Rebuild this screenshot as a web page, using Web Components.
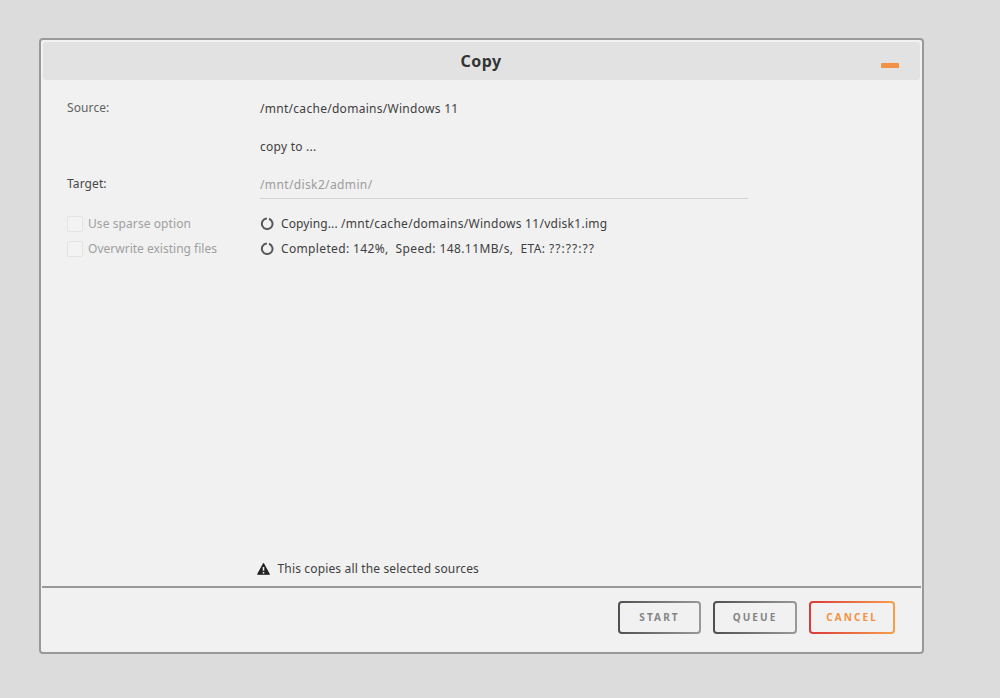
<!DOCTYPE html>
<html lang="en">
<head>
<meta charset="utf-8">
<title>Copy</title>
<style>
html, body { margin: 0; height: 100%; overflow: hidden; }
body { background: #dcdcdc; font-family: "Noto Sans", "Open Sans", sans-serif; font-size: 12px; color: #404040; }
file-dialog { margin: 38px 0 0 39px; }
</style>
</head>
<body>
<file-dialog heading="Copy">
  <field-row label="Source:" style="--h:37px;--c:#626262"><fit-text w="198.5">/mnt/cache/domains/Windows 11</fit-text></field-row>
  <field-row label="" style="--h:38px"><fit-text w="56.5">copy to ...</fit-text></field-row>
  <field-row label="Target:" style="--h:38px"><target-input><fit-text w="112.5">/mnt/disk2/admin/</fit-text></target-input></field-row>
  <option-row style="--h:25px"><fit-text slot="option" w="103">Use sparse option</fit-text><span><fit-text w="60">Copying... </fit-text><fit-text w="266.5">/mnt/cache/domains/Windows 11/vdisk1.img</fit-text></span></option-row>
  <option-row style="--h:25px"><fit-text slot="option" w="129">Overwrite existing files</fit-text><span><fit-text w="114.5">Completed: 142%,&nbsp;&nbsp;</fit-text><fit-text w="125">Speed: 148.11MB/s,&nbsp;&nbsp;</fit-text><fit-text w="28.5">ETA:&nbsp;</fit-text><fit-text w="46">??:??:??</fit-text></span></option-row>
  <warning-note slot="note"><fit-text w="201.5">This copies all the selected sources</fit-text></warning-note>
  <outline-button slot="actions" style="--w:83px">START</outline-button>
  <outline-button slot="actions" style="--w:84px">QUEUE</outline-button>
  <outline-button slot="actions" style="--w:86px;--from:#dd3838;--to:#f5a04e;--ink:#f29246">CANCEL</outline-button>
</file-dialog>
<script>
const define = (name, html, ready) => customElements.define(name, class extends HTMLElement {
  connectedCallback() {
    if (this.shadowRoot) return;
    this.attachShadow({ mode: "open" }).innerHTML = html;
    if (ready) ready(this, this.shadowRoot);
  }
});

// One line of text whose tracking is adjusted to a given width.
define("fit-text", `<style>
:host { display: inline-block; white-space: pre; line-height: 16px; }
</style><span><slot></slot></span>`, (host, root) => {
  const span = root.querySelector("span");
  const width = span.getBoundingClientRect().width;
  span.style.letterSpacing = (Number(host.getAttribute("w")) - width) / host.textContent.length + "px";
});

define("file-dialog", `<style>
:host { display: flex; flex-direction: column; box-sizing: border-box; width: 885px; height: 616px;
  border: 2px solid #999; border-radius: 4px; background: #f1f1f1; padding: 2px 1px 0 1px; }
header { height: 38px; flex: none; display: grid; grid-template-columns: 1fr auto 1fr; align-items: center;
  background: #e2e2e2; border-radius: 3px; margin: 0 1px; }
h1 { grid-column: 2; margin: 0 0 0 -1px; font-size: 16px; line-height: 22px; font-weight: 700; letter-spacing: .45px; color: #333; }
i { justify-self: end; width: 18px; height: 5px; margin: 8px 21px 0 0; border-radius: 1px; background: #f29246; }
main { flex: 1; padding: 10px 24px 0 25px; }
.note { height: 25px; padding-left: 215px; }
footer { height: 66px; box-sizing: border-box; flex: none; border-top: 2px solid #999; display: flex; justify-content: flex-end; gap: 12px; padding: 13px 26px 0 0; }
</style>
<header><h1></h1><i></i></header><main><slot></slot></main><div class="note"><slot name="note"></slot></div><footer><slot name="actions"></slot></footer>`,
(host, root) => root.querySelector("h1").textContent = host.getAttribute("heading"));

define("field-row", `<style>
:host { display: grid; grid-template-columns: 193px 488px; height: var(--h); align-items: center; }
label { line-height: 16px; letter-spacing: .1px; color: var(--c, #484848); margin-top: -1px; }
</style><label></label><div><slot></slot></div>`, (host, root) => root.querySelector("label").textContent = host.getAttribute("label"));

define("target-input", `<style>
:host { display: block; box-sizing: border-box; height: 30px; padding-top: 7px; border-bottom: 1px solid #d2d2d2; color: #9c9c9c; }
</style><slot></slot>`);

define("option-row", `<style>
:host { display: grid; grid-template-columns: 193px 1fr; height: var(--h); padding-top: 8px; margin-bottom: -8px; align-items: center; }
label { display: flex; align-items: center; gap: 5px; color: #a0a0a0; }
b { width: 16px; height: 16px; box-sizing: border-box; border: 1px solid #e3e3e3; border-radius: 2px; background: #f3f3f3; margin-top: 1px; }
div { display: flex; align-items: center; gap: 7px; }
svg { width: 14px; height: 14px; flex: none; }
</style><label><b></b><slot name="option"></slot></label>
<div><svg viewBox="0 0 14 14"><path d="M9 1.8A5.3 5.3 0 1 1 6.9 1.5" fill="none" stroke="#585858" stroke-width="2"/></svg><slot></slot></div>`);

define("warning-note", `<style>
:host { display: flex; align-items: center; gap: 7.5px; }
svg { width: 13px; height: 12px; flex: none; margin-top: -1px; }
</style><svg viewBox="0 0 13 12"><path d="M6.5.8 12.2 11.2H.8Z" fill="#222" stroke="#222" stroke-width="1.3" stroke-linejoin="round"/><path d="M6.5 4v3.7M6.5 9v1.6" stroke="#f1f1f1" stroke-width="1.6"/></svg><slot></slot>`);

define("outline-button", `<style>
:host { display: block; width: var(--w); height: 33px; }
button { all: unset; box-sizing: border-box; width: 100%; height: 100%; display: block; text-align: center; border: 2px solid transparent; border-radius: 4px;
  background: linear-gradient(#f1f1f1, #f1f1f1) padding-box, linear-gradient(90deg, var(--from, #505050), var(--to, #999)) border-box;
  color: var(--ink, #858585); font-weight: 700; font-size: 10px; line-height: 29px; letter-spacing: 2.1px; }
</style><button><slot></slot></button>`);
</script>
</body>
</html>
